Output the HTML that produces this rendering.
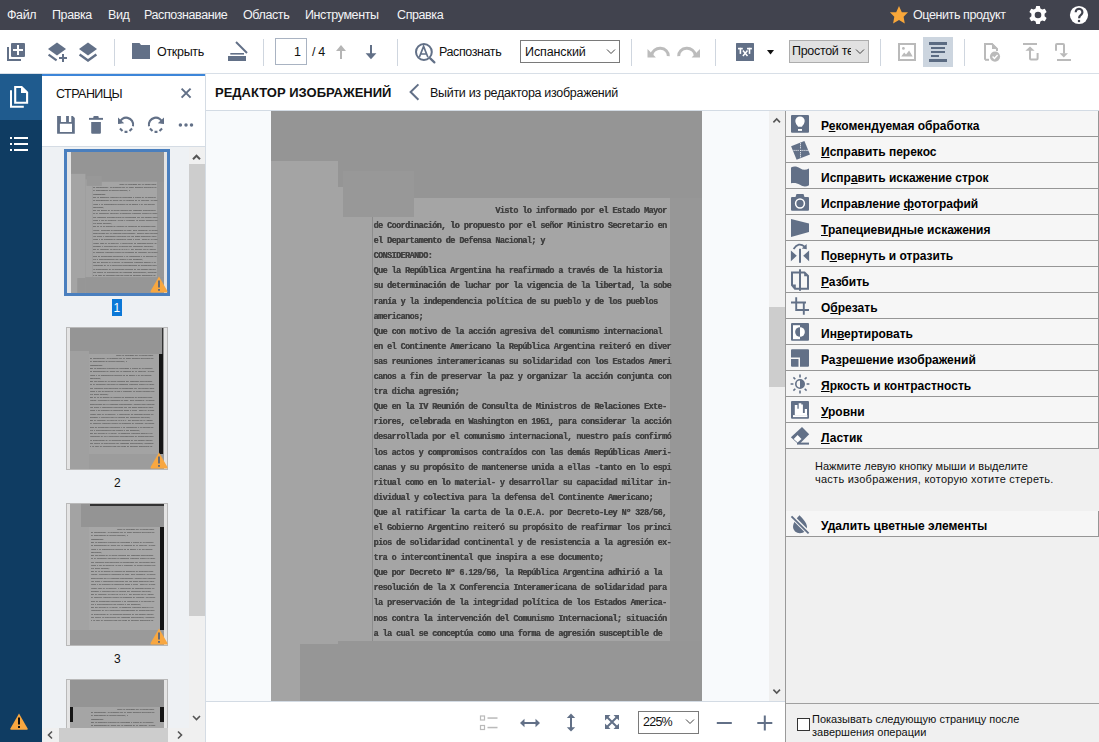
<!DOCTYPE html>
<html><head><meta charset="utf-8">
<style>
*{box-sizing:border-box;margin:0;padding:0}
html,body{width:1099px;height:742px;overflow:hidden;background:#fff;font-family:"Liberation Sans",sans-serif;color:#000}
.a{position:absolute}
.mi{position:absolute;top:8px;font-size:12.5px;color:#f4f4f6;letter-spacing:-0.4px;white-space:nowrap}
.tt{position:absolute;font-size:12.5px;color:#111;white-space:nowrap;letter-spacing:-0.3px}
.sep{position:absolute;top:39px;width:1px;height:27px;background:#cfd6df}
.it{position:absolute;left:786px;width:313px;height:26px;background:#f6f6f6;border-right:1px solid #969696;border-bottom:1px solid #969696}
.it span{position:absolute;left:35px;top:8px;font-size:12px;font-weight:700;white-space:nowrap;color:#000}
.it u{text-decoration:underline;text-decoration-thickness:1px;text-underline-offset:0.5px}
.dtx{position:absolute;left:102.5px;top:144px;font-family:"Liberation Mono",monospace;font-weight:700;font-size:8.5px;line-height:15.1px;letter-spacing:-0.594px;color:#424242;white-space:pre;filter:blur(0.3px);text-shadow:0.3px 0 0 #424242}
.th .dtx{opacity:0.6}
</style></head><body>

<!-- backgrounds -->
<div class="a" style="left:0;top:0;width:1099px;height:30px;background:#41434e"></div>
<div class="a" style="left:0;top:73px;width:1099px;height:1px;background:#d8dfe7"></div>
<div class="a" style="left:0;top:74px;width:42px;height:668px;background:#0f3c62"></div>
<div class="a" style="left:0;top:74px;width:42px;height:46px;background:#1f5b8e"></div>
<div class="a" style="left:42px;top:74px;width:163px;height:2px;background:#3d86d9"></div>
<div class="a" style="left:205px;top:74px;width:1px;height:668px;background:#d5dce4"></div>
<div class="a" style="left:42px;top:146px;width:163px;height:1px;background:#d5dce4"></div>
<div class="a" style="left:42px;top:147px;width:147px;height:581px;background:#eef1f4"></div>
<div class="a" style="left:189px;top:147px;width:16px;height:581px;background:#f0f0f0"></div>
<div class="a" style="left:189px;top:164px;width:16px;height:452px;background:#cdcdcd"></div>
<div class="a" style="left:42px;top:728px;width:163px;height:14px;background:#f0f0f0"></div>
<div class="a" style="left:59px;top:728px;width:109px;height:14px;background:#cdcdcd"></div>
<div class="a" style="left:206px;top:110px;width:579px;height:1px;background:#d3dbe4"></div>
<div class="a" style="left:206px;top:111px;width:563px;height:590px;background:#f8fafc"></div>
<div class="a" style="left:769px;top:111px;width:16px;height:590px;background:#f0f0f0"></div>
<div class="a" style="left:769px;top:307px;width:16px;height:80px;background:#cdcdcd"></div>
<div class="a" style="left:206px;top:701px;width:579px;height:1px;background:#d3dbe4"></div>
<div class="a" style="left:785px;top:110px;width:314px;height:632px;background:#f0f0f0"></div>
<div class="a" style="left:785px;top:110px;width:1px;height:632px;background:#9a9a9a"></div>
<div class="a" style="left:786px;top:703px;width:313px;height:1px;background:#a0a0a0"></div>

<!-- document image -->
<div class="a" style="left:271px;top:111px;width:431px;height:590px;overflow:hidden">
<div class="a" style="left:0;top:-51px;width:431px;height:653px"><div class="a" style="left:0;top:0;width:431px;height:653px;background:#959595">
<div class="a" style="left:0;top:101px;width:67px;height:552px;background:#a4a4a4"></div>
<div class="a" style="left:67px;top:127px;width:34px;height:454px;background:#a4a4a4"></div>
<div class="a" style="left:101px;top:138px;width:298px;height:443px;background:#a5a5a5;border-left:1px solid #8c8c8c"></div>
<div class="a" style="left:72px;top:111px;width:71px;height:46px;background:#989898"></div>
<div class="a" style="left:399px;top:138px;width:32px;height:443px;background:#979797"></div>
<div class="a" style="left:29px;top:584px;width:38px;height:69px;background:#969696"></div>
<div class="a" style="left:67px;top:581px;width:364px;height:72px;background:#969696"></div>
<pre class="dtx">                           Visto lo informado por el Estado Mayor
de Coordinación, lo propuesto por el señor Ministro Secretario en
el Departamento de Defensa Nacional; y
CONSIDERANDO:
Que la República Argentina ha reafirmado a través de la historia
su determinación de luchar por la vigencia de la libertad, la sobe
ranía y la independencia política de su pueblo y de los pueblos
americanos;
Que con motivo de la acción agresiva del comunismo internacional
en el Continente Americano la República Argentina reiteró en diver
sas reuniones interamericanas su solidaridad con los Estados Ameri
canos a fin de preservar la paz y organizar la acción conjunta con
tra dicha agresión;
Que en la IV Reunión de Consulta de Ministros de Relaciones Exte-
riores, celebrada en Washington en 1951, para considerar la acción
desarrollada por el comunismo internacional, nuestro país confirmó
los actos y compromisos contraídos con las demás Repúblicas Ameri-
canas y su propósito de mantenerse unida a ellas -tanto en lo espi
ritual como en lo material- y desarrollar su capacidad militar in-
dividual y colectiva para la defensa del Continente Americano;
Que al ratificar la carta de la O.E.A. por Decreto-Ley Nº 328/56,
el Gobierno Argentino reiteró su propósito de reafirmar los princi
pios de solidaridad continental y de resistencia a la agresión ex-
tra o intercontinental que inspira a ese documento;
Que por Decreto Nº 6.129/56, la República Argentina adhirió a la
resolución de la X Conferencia Interamericana de solidaridad para
la preservación de la integridad política de los Estados America-
nos contra la intervención del Comunismo Internacional; situación
a la cual se conceptúa como una forma de agresión susceptible de</pre>
</div></div>
</div>
<!-- thumbnails -->
<div class="a" style="left:64px;top:149px;width:106px;height:147px;border:3px solid #4a7fbe;background:#e4e4e4"></div>
<div class="a th" style="left:71px;top:152px;width:93px;height:141px;overflow:hidden"><div class="a" style="left:0;top:0;width:431px;height:653px;transform:scale(0.2158);transform-origin:0 0;filter:blur(1.2px)"><div class="a" style="left:0;top:0;width:431px;height:653px;background:#959595">
<div class="a" style="left:0;top:101px;width:67px;height:552px;background:#a4a4a4"></div>
<div class="a" style="left:67px;top:127px;width:34px;height:454px;background:#a4a4a4"></div>
<div class="a" style="left:101px;top:138px;width:298px;height:443px;background:#a5a5a5;border-left:1px solid #8c8c8c"></div>
<div class="a" style="left:72px;top:111px;width:71px;height:46px;background:#989898"></div>
<div class="a" style="left:399px;top:138px;width:32px;height:443px;background:#979797"></div>
<div class="a" style="left:29px;top:584px;width:38px;height:69px;background:#969696"></div>
<div class="a" style="left:67px;top:581px;width:364px;height:72px;background:#969696"></div>
<pre class="dtx">                           Visto lo informado por el Estado Mayor
de Coordinación, lo propuesto por el señor Ministro Secretario en
el Departamento de Defensa Nacional; y
CONSIDERANDO:
Que la República Argentina ha reafirmado a través de la historia
su determinación de luchar por la vigencia de la libertad, la sobe
ranía y la independencia política de su pueblo y de los pueblos
americanos;
Que con motivo de la acción agresiva del comunismo internacional
en el Continente Americano la República Argentina reiteró en diver
sas reuniones interamericanas su solidaridad con los Estados Ameri
canos a fin de preservar la paz y organizar la acción conjunta con
tra dicha agresión;
Que en la IV Reunión de Consulta de Ministros de Relaciones Exte-
riores, celebrada en Washington en 1951, para considerar la acción
desarrollada por el comunismo internacional, nuestro país confirmó
los actos y compromisos contraídos con las demás Repúblicas Ameri-
canas y su propósito de mantenerse unida a ellas -tanto en lo espi
ritual como en lo material- y desarrollar su capacidad militar in-
dividual y colectiva para la defensa del Continente Americano;
Que al ratificar la carta de la O.E.A. por Decreto-Ley Nº 328/56,
el Gobierno Argentino reiteró su propósito de reafirmar los princi
pios de solidaridad continental y de resistencia a la agresión ex-
tra o intercontinental que inspira a ese documento;
Que por Decreto Nº 6.129/56, la República Argentina adhirió a la
resolución de la X Conferencia Interamericana de solidaridad para
la preservación de la integridad política de los Estados America-
nos contra la intervención del Comunismo Internacional; situación
a la cual se conceptúa como una forma de agresión susceptible de</pre>
</div></div></div>
<div class="a" style="left:112px;top:299px;width:10px;height:17px;background:#0b78d7"></div>
<div class="a" style="left:113.5px;top:300.5px;font-size:12px;color:#fff">1</div>

<div class="a" style="left:66px;top:327px;width:102px;height:143px;border:1px solid #b9b9b9;background:#e4e4e4"></div>
<div class="a" style="left:70px;top:328px;width:94px;height:141px;background:#959595"></div>
<div class="a" style="left:70px;top:351px;width:19px;height:118px;background:#a0a0a0"></div>
<div class="a" style="left:89px;top:354px;width:70px;height:100px;background:#a3a3a3"></div>
<div class="a" style="left:89px;top:454px;width:75px;height:15px;background:#9c9c9c"></div>
<div class="a" style="left:90px;top:354px;width:68px;height:100px;overflow:hidden;opacity:0.6;filter:blur(0.3px)"><div class="a" style="left:0;top:0px;width:320px;height:500px;transform:scale(0.2158);transform-origin:0 0"><pre class="dtx" style="left:0;top:0">                           Visto lo informado por el Estado Mayor
de Coordinación, lo propuesto por el señor Ministro Secretario en
el Departamento de Defensa Nacional; y
CONSIDERANDO:
Que la República Argentina ha reafirmado a través de la historia
su determinación de luchar por la vigencia de la libertad, la sobe
ranía y la independencia política de su pueblo y de los pueblos
americanos;
Que con motivo de la acción agresiva del comunismo internacional
en el Continente Americano la República Argentina reiteró en diver
sas reuniones interamericanas su solidaridad con los Estados Ameri
canos a fin de preservar la paz y organizar la acción conjunta con
tra dicha agresión;
Que en la IV Reunión de Consulta de Ministros de Relaciones Exte-
riores, celebrada en Washington en 1951, para considerar la acción
desarrollada por el comunismo internacional, nuestro país confirmó
los actos y compromisos contraídos con las demás Repúblicas Ameri-
canas y su propósito de mantenerse unida a ellas -tanto en lo espi
ritual como en lo material- y desarrollar su capacidad militar in-
dividual y colectiva para la defensa del Continente Americano;
Que al ratificar la carta de la O.E.A. por Decreto-Ley Nº 328/56,
el Gobierno Argentino reiteró su propósito de reafirmar los princi
pios de solidaridad continental y de resistencia a la agresión ex-
tra o intercontinental que inspira a ese documento;
Que por Decreto Nº 6.129/56, la República Argentina adhirió a la
resolución de la X Conferencia Interamericana de solidaridad para
la preservación de la integridad política de los Estados America-
nos contra la intervención del Comunismo Internacional; situación
a la cual se conceptúa como una forma de agresión susceptible de</pre></div></div>
<div class="a" style="left:159px;top:354px;width:4px;height:100px;background:#151515"></div>
<div class="a" style="left:162px;top:328px;width:1px;height:26px;background:#333"></div>
<div class="a" style="left:114px;top:476px;font-size:12px;color:#111">2</div>

<div class="a" style="left:66px;top:503px;width:102px;height:143px;border:1px solid #b9b9b9;background:#e4e4e4"></div>
<div class="a" style="left:70px;top:504px;width:94px;height:141px;background:#a3a3a3"></div>
<div class="a" style="left:81px;top:504px;width:83px;height:23px;background:#949494"></div>
<div class="a" style="left:90px;top:504px;width:74px;height:1.5px;background:#333"></div>
<div class="a" style="left:89px;top:527px;width:71px;height:103px;background:#a7a7a7"></div>
<div class="a" style="left:70px;top:630px;width:94px;height:15px;background:#9a9a9a"></div>
<div class="a" style="left:91px;top:528px;width:67px;height:102px;overflow:hidden;opacity:0.6;filter:blur(0.3px)"><div class="a" style="left:0;top:0px;width:320px;height:500px;transform:scale(0.2158);transform-origin:0 0"><pre class="dtx" style="left:0;top:0">                           Visto lo informado por el Estado Mayor
de Coordinación, lo propuesto por el señor Ministro Secretario en
el Departamento de Defensa Nacional; y
CONSIDERANDO:
Que la República Argentina ha reafirmado a través de la historia
su determinación de luchar por la vigencia de la libertad, la sobe
ranía y la independencia política de su pueblo y de los pueblos
americanos;
Que con motivo de la acción agresiva del comunismo internacional
en el Continente Americano la República Argentina reiteró en diver
sas reuniones interamericanas su solidaridad con los Estados Ameri
canos a fin de preservar la paz y organizar la acción conjunta con
tra dicha agresión;
Que en la IV Reunión de Consulta de Ministros de Relaciones Exte-
riores, celebrada en Washington en 1951, para considerar la acción
desarrollada por el comunismo internacional, nuestro país confirmó
los actos y compromisos contraídos con las demás Repúblicas Ameri-
canas y su propósito de mantenerse unida a ellas -tanto en lo espi
ritual como en lo material- y desarrollar su capacidad militar in-
dividual y colectiva para la defensa del Continente Americano;
Que al ratificar la carta de la O.E.A. por Decreto-Ley Nº 328/56,
el Gobierno Argentino reiteró su propósito de reafirmar los princi
pios de solidaridad continental y de resistencia a la agresión ex-
tra o intercontinental que inspira a ese documento;
Que por Decreto Nº 6.129/56, la República Argentina adhirió a la
resolución de la X Conferencia Interamericana de solidaridad para
la preservación de la integridad política de los Estados America-
nos contra la intervención del Comunismo Internacional; situación
a la cual se conceptúa como una forma de agresión susceptible de</pre></div></div>
<div class="a" style="left:160px;top:527px;width:4px;height:103px;background:#151515"></div>
<div class="a" style="left:114px;top:652px;font-size:12px;color:#111">3</div>

<div class="a" style="left:66px;top:679px;width:102px;height:49px;border:1px solid #b9b9b9;border-bottom:none;background:#e4e4e4"></div>
<div class="a" style="left:70px;top:680px;width:94px;height:48px;background:#a5a5a5"></div>
<div class="a" style="left:70px;top:680px;width:94px;height:27px;background:#949494"></div>
<div class="a" style="left:91px;top:708px;width:67px;height:19px;overflow:hidden;opacity:0.6;filter:blur(0.3px)"><div class="a" style="left:0;top:0px;width:320px;height:500px;transform:scale(0.2158);transform-origin:0 0"><pre class="dtx" style="left:0;top:0">                           Visto lo informado por el Estado Mayor
de Coordinación, lo propuesto por el señor Ministro Secretario en
el Departamento de Defensa Nacional; y
CONSIDERANDO:
Que la República Argentina ha reafirmado a través de la historia
su determinación de luchar por la vigencia de la libertad, la sobe
ranía y la independencia política de su pueblo y de los pueblos
americanos;
Que con motivo de la acción agresiva del comunismo internacional
en el Continente Americano la República Argentina reiteró en diver
sas reuniones interamericanas su solidaridad con los Estados Ameri
canos a fin de preservar la paz y organizar la acción conjunta con
tra dicha agresión;
Que en la IV Reunión de Consulta de Ministros de Relaciones Exte-
riores, celebrada en Washington en 1951, para considerar la acción
desarrollada por el comunismo internacional, nuestro país confirmó
los actos y compromisos contraídos con las demás Repúblicas Ameri-
canas y su propósito de mantenerse unida a ellas -tanto en lo espi
ritual como en lo material- y desarrollar su capacidad militar in-
dividual y colectiva para la defensa del Continente Americano;
Que al ratificar la carta de la O.E.A. por Decreto-Ley Nº 328/56,
el Gobierno Argentino reiteró su propósito de reafirmar los princi
pios de solidaridad continental y de resistencia a la agresión ex-
tra o intercontinental que inspira a ese documento;
Que por Decreto Nº 6.129/56, la República Argentina adhirió a la
resolución de la X Conferencia Interamericana de solidaridad para
la preservación de la integridad política de los Estados America-
nos contra la intervención del Comunismo Internacional; situación
a la cual se conceptúa como una forma de agresión susceptible de</pre></div></div>
<div class="a" style="left:70px;top:707px;width:2.5px;height:15px;background:#151515"></div>
<div class="a" style="left:160px;top:707px;width:4px;height:15px;background:#151515"></div>
<!-- right panel items -->
<div class="it" style="top:110px;height:27px"><span style="top:9px">Р<u>е</u>комендуемая обработка</span></div>
<div class="it" style="top:137px;height:26px"><span><u>И</u>справить перекос</span></div>
<div class="it" style="top:163px;height:26px"><span>Испр<u>а</u>вить искажение строк</span></div>
<div class="it" style="top:189px;height:26px"><span>Исправление <u>ф</u>отографий</span></div>
<div class="it" style="top:215px;height:26px"><span><u>Т</u>рапециевидные искажения</span></div>
<div class="it" style="top:241px;height:26px"><span>П<u>о</u>вернуть и отразить</span></div>
<div class="it" style="top:267px;height:26px"><span><u>Р</u>азбить</span></div>
<div class="it" style="top:293px;height:26px"><span>О<u>б</u>резать</span></div>
<div class="it" style="top:319px;height:26px"><span>Ин<u>в</u>ертировать</span></div>
<div class="it" style="top:345px;height:26px"><span>Ра<u>з</u>решение изображений</span></div>
<div class="it" style="top:371px;height:26px"><span><u>Я</u>ркость и контрастность</span></div>
<div class="it" style="top:397px;height:26px"><span><u>У</u>ровни</span></div>
<div class="it" style="top:423px;height:26px"><span><u>Л</u>астик</span></div>
<div class="it" style="top:511px;height:26px"><span>У<u>д</u>алить цветные элементы</span></div>
<div class="a" style="left:786px;top:449px;width:312px;height:62px;background:#f0f0f0"></div>
<div class="a" style="left:785px;top:110px;width:314px;height:1px;background:#d3dbe4"></div>
<div class="a" style="left:815px;top:459.5px;font-size:11px;line-height:13.5px;color:#111;white-space:nowrap">Нажмите левую кнопку мыши и выделите<br><span style="letter-spacing:0.25px">часть изображения, которую хотите стереть.</span></div>

<!-- menu text -->
<div class="mi" style="left:7px">Файл</div>
<div class="mi" style="left:52px">Правка</div>
<div class="mi" style="left:108px">Вид</div>
<div class="mi" style="left:144px">Распознавание</div>
<div class="mi" style="left:243px">Область</div>
<div class="mi" style="left:305px">Инструменты</div>
<div class="mi" style="left:397px">Справка</div>
<div class="mi" style="left:913px">Оценить продукт</div>

<!-- toolbar -->
<div class="sep" style="left:114px"></div>
<div class="sep" style="left:263px"></div>
<div class="sep" style="left:397px"></div>
<div class="sep" style="left:631px"></div>
<div class="sep" style="left:715px"></div>
<div class="sep" style="left:880px"></div>
<div class="sep" style="left:964px"></div>
<div class="tt" style="left:157px;top:45px">Открыть</div>
<div class="a" style="left:275px;top:38px;width:32px;height:27px;border:1px solid #a9b3c2;background:#fff"></div>
<div class="tt" style="left:294px;top:45px">1</div>
<div class="tt" style="left:312px;top:45px">/ 4</div>
<div class="tt" style="left:439px;top:45px;letter-spacing:-0.4px">Распознать</div>
<div class="a" style="left:520px;top:40px;width:100px;height:23px;border:1px solid #7a7a7a;background:#fff"></div>
<div class="tt" style="left:525px;top:44.5px;letter-spacing:-0.1px">Испанский</div>
<div class="a" style="left:789px;top:40px;width:80px;height:23px;border:1px solid #adadad;background:#e1e1e1"></div>
<div class="a" style="left:792px;top:44px;width:59px;height:18px;overflow:hidden"><div class="tt" style="left:0;top:0">Простой текст</div></div>
<div class="a" style="left:923px;top:37px;width:30px;height:30px;background:#ccd5df"></div>

<!-- pages header -->
<div class="tt" style="left:56px;top:87px;letter-spacing:-0.55px">СТРАНИЦЫ</div>
<div class="a" style="left:215px;top:85px;font-size:13px;font-weight:700;color:#111;white-space:nowrap">РЕДАКТОР ИЗОБРАЖЕНИЙ</div>
<div class="tt" style="left:430px;top:86px">Выйти из редактора изображений</div>

<!-- bottom bar -->
<div class="a" style="left:638px;top:711px;width:61px;height:23px;border:1px solid #7a7a7a;background:#fff"></div>
<div class="tt" style="left:643px;top:715px;letter-spacing:-0.75px">225%</div>
<div class="a" style="left:797px;top:718px;width:13px;height:13px;border:1px solid #333;background:#fff"></div>
<div class="a" style="left:812px;top:712.5px;font-size:11px;line-height:13px;color:#111;white-space:nowrap">Показывать следующую страницу после<br>завершения операции</div>
<svg class="a" style="left:0;top:0" width="1099" height="742" viewBox="0 0 1099 742">
<!-- menubar: star, gear, help -->
<polygon fill="#f8a73a" points="899,5.9 901.8,12.3 908,12.3 903.6,16.7 904.8,23.4 899,20 893.1,23.4 894.3,16.7 889.9,12.3 896.2,12.3"/>
<g transform="translate(1038,15)">
<path fill="#fff" fill-rule="evenodd" d="M-1.8,-9 H1.8 L2.4,-6.4 L4.2,-5.4 L6.8,-6.2 L8.6,-3.1 L6.6,-1.2 V1.2 L8.6,3.1 L6.8,6.2 L4.2,5.4 L2.4,6.4 L1.8,9 H-1.8 L-2.4,6.4 L-4.2,5.4 L-6.8,6.2 L-8.6,3.1 L-6.6,1.2 V-1.2 L-8.6,-3.1 L-6.8,-6.2 L-4.2,-5.4 L-2.4,-6.4 Z M0,-3.3 A3.3,3.3 0 1,0 0,3.3 A3.3,3.3 0 1,0 0,-3.3 Z"/>
</g>
<circle cx="1079" cy="15" r="9.1" fill="#fff"/>
<path d="M1075.7,12.2 A3.35,3.35 0 1,1 1081.7,14.2 C1080.4,15.3 1079.1,16 1079.1,18.2" fill="none" stroke="#41434e" stroke-width="2.2"/>
<rect x="1077.9" y="19.9" width="2.2" height="2.2" fill="#41434e"/>

<!-- toolbar icons -->
<g fill="#627087">
<rect x="11" y="43" width="14" height="14" rx="1"/>
<path d="M7,47 h2 v12 h12 v2 h-14 z"/>
<polygon points="57,42.6 66,49 57,55.4 48,49"/>
<polygon points="88,42.6 97,49 88,55.4 79,49"/>
<path d="M132,43 h7.5 l1.5,2 h9 v14 h-18 z"/>
<rect x="228" y="56" width="18" height="5"/>
<rect x="230.3" y="53" width="13.7" height="1.6"/>
<rect x="736" y="43" width="18" height="18" rx="0.5"/>
</g>
<g stroke="#627087" fill="none">
<path d="M48.6,54.6 L56.6,60.4" stroke-width="2.2"/>
<path d="M79.6,54.6 L88,60.6 L96.4,54.6" stroke-width="2.4"/>
<path d="M236,42 L247,53" stroke-width="2"/>
</g>
<g fill="#fff">
<rect x="13" y="49" width="10" height="2"/>
<rect x="17" y="45" width="2" height="10"/>
</g>
<rect x="59" y="57" width="8" height="2" fill="#627087"/>
<rect x="62" y="54" width="2" height="8" fill="#627087"/>
<!-- page arrows -->
<path d="M341,45 L346,51 H342 V59 H340 V51 H336 Z" fill="#b5b5b5"/>
<path d="M371,59.3 L376.4,53.2 H372 V45 H370 V53.2 H365.6 Z" fill="#627087"/>
<!-- recognize -->
<circle cx="423.9" cy="52" r="7.9" stroke="#627087" stroke-width="2" fill="none"/>
<path d="M419.3,57.2 L423.6,46.4 L427.9,57.2 M420.6,54 H426.6" stroke="#627087" stroke-width="1.7" fill="none"/>
<path d="M430.2,58.4 L434.4,62.4" stroke="#627087" stroke-width="2.2" stroke-linecap="round"/>
<!-- dropdown chevrons -->
<path d="M607,49.5 L611,53.5 L615,49.5" stroke="#444" stroke-width="1" fill="none"/>
<path d="M856,49.5 L860,53.5 L864,49.5" stroke="#444" stroke-width="1" fill="none"/>
<!-- undo redo -->
<path d="M651.8,55.2 A8.2,7.4 0 0,1 668.3,56.2" stroke="#bcbcbc" stroke-width="3" fill="none"/>
<polygon points="647.5,49 647.5,57.4 655.9,57.4" fill="#bcbcbc"/>
<path d="M678.7,56.2 A8.2,7.4 0 0,1 695.2,55.2" stroke="#bcbcbc" stroke-width="3" fill="none"/>
<polygon points="700,49 700,57.4 691.6,57.4" fill="#bcbcbc"/>
<!-- TxT -->
<g fill="#fff"><rect x="738" y="47.8" width="4.8" height="1.6"/><rect x="739.6" y="47.8" width="1.6" height="6.1"/><rect x="747" y="47.8" width="4.9" height="1.6"/><rect x="748.7" y="47.8" width="1.6" height="6.1"/></g>
<path d="M742.9,50.4 L747.5,55.9 M747.5,50.4 L742.9,55.9" stroke="#fff" stroke-width="1.5"/>
<polygon points="767,50 774,50 770.5,54.4" fill="#111"/>
<!-- image icon disabled -->
<rect x="899" y="44" width="16" height="16" stroke="#bababa" stroke-width="2" fill="none"/>
<circle cx="903.4" cy="48.4" r="1.4" fill="#bababa"/>
<polygon points="901.2,56.6 904.2,52.4 906,54.6 909.1,50.4 912.7,56.6" fill="#bababa"/>
<!-- align icon -->
<g fill="#5b6b82">
<rect x="929" y="42" width="18" height="3"/>
<rect x="931" y="47" width="14" height="2"/>
<rect x="931" y="51" width="14" height="2"/>
<rect x="931" y="55" width="8" height="2"/>
<rect x="929" y="59" width="18" height="3"/>
</g>
<!-- doc check -->
<path d="M985,59.8 V44 H992 L997,49 V51" stroke="#bababa" stroke-width="2" fill="none"/>
<path d="M985,59.8 H989" stroke="#bababa" stroke-width="2"/>
<polygon points="992,43 998,49 992,49" fill="#bababa"/>
<circle cx="995" cy="56.6" r="5.1" fill="#bababa"/>
<path d="M992.6,56.6 L994.4,58.4 L997.6,55" stroke="#fff" stroke-width="1.4" fill="none"/>
<!-- upload -->
<rect x="1023" y="43" width="14" height="2" fill="#bababa"/>
<polygon points="1030,46.6 1034.6,50.8 1025.4,50.8" fill="#bababa"/>
<path d="M1030,50 V58.6 Q1030,59.6 1031,59.6 H1036.6 Q1037.6,59.6 1037.6,58.6 V53" stroke="#bababa" stroke-width="2" fill="none"/>
<!-- download -->
<path d="M1056,50.8 V45 Q1056,44 1057,44 H1063 Q1064,44 1064,45 V53.5" stroke="#bababa" stroke-width="2" fill="none"/>
<polygon points="1059.6,53.3 1068,53.3 1063.8,57.5" fill="#bababa"/>
<rect x="1057" y="59" width="14" height="2" fill="#bababa"/>

<!-- sidebar icons -->
<path d="M15.2,102.7 V87 H21.6 L27.1,92.5 V102.7 Z" stroke="#fff" stroke-width="2.1" fill="none"/>
<polygon points="21,86 28.1,93.1 21,93.1" fill="#fff"/>
<path d="M11,90.2 V106.7 H23.8" stroke="#fff" stroke-width="2" fill="none"/>
<g fill="#fff">
<rect x="10" y="137" width="2" height="2"/><rect x="14" y="137" width="14" height="2"/>
<rect x="10" y="143" width="2" height="2"/><rect x="14" y="143" width="14" height="2"/>
<rect x="10" y="149" width="2" height="2"/><rect x="14" y="149" width="14" height="2"/>
</g>
<!-- bottom warning -->
<path d="M19,713.6 L27.6,728.4 Q28.2,729.8 26.8,729.8 H11.2 Q9.8,729.8 10.4,728.4 Z" fill="#f8a740"/>
<rect x="18" y="717.5" width="2" height="7" fill="#111"/>
<rect x="18" y="726" width="2" height="2" fill="#111"/>

<!-- pages panel icons -->
<path d="M181.6,88.6 L190.6,97.6 M190.6,88.6 L181.6,97.6" stroke="#627087" stroke-width="2"/>
<path fill="#627087" fill-rule="evenodd" d="M57.1,116 H72.8 L74.8,118 V133.8 H57.1 Z M60.9,116 V121.9 H66.1 V116 Z M68.9,116 V121.9 H71.3 V116 Z M59.9,123.8 V132.1 H72 V123.8 Z"/>
<g fill="#627087">
<rect x="93.3" y="116" width="5.4" height="3" rx="1"/>
<rect x="89" y="117.9" width="14" height="1.9"/>
<path d="M91.2,121.9 H100.9 V132.8 Q100.9,133.8 99.9,133.8 H92.2 Q91.2,133.8 91.2,132.8 Z"/>
<circle cx="180.4" cy="125" r="1.75"/><circle cx="186" cy="125" r="1.75"/><circle cx="191.5" cy="125" r="1.75"/>
</g>
<g id="rotl">
<path d="M119.3,123.2 A7,7 0 0,1 133,126.2" stroke="#627087" stroke-width="2.1" fill="none"/>
<path d="M132.06,128.5 L129.5,131.06 M127.46,131.85 L124.54,131.85 M122.5,131.06 L119.94,128.5" stroke="#627087" stroke-width="2.1" fill="none"/>
<polygon points="118,117.5 118,124 124.2,123.2" fill="#627087"/>
</g>
<use href="#rotl" transform="translate(282,0) scale(-1,1)"/>
<!-- thumbnail warnings -->
<g id="warn">
<path d="M159,276.4 L167.4,291 Q168,292.6 166.4,292.6 H151.6 Q150,292.6 150.6,291 Z" fill="#f8a740"/>
<rect x="158.1" y="280.5" width="1.8" height="7" fill="#56647a"/>
<rect x="158.1" y="289" width="1.8" height="1.8" fill="#56647a"/>
</g>
<use href="#warn" transform="translate(0,176)"/>
<use href="#warn" transform="translate(0,352)"/>
<!-- scrollbar arrows pages -->
<path d="M193,159.2 L196.5,155.7 L200,159.2" stroke="#555" stroke-width="2" fill="none"/>
<path d="M193,716 L196.5,719.5 L200,716" stroke="#555" stroke-width="1.6" fill="none"/>
<path d="M52,731.5 L48.5,735 L52,738.5" stroke="#555" stroke-width="1.6" fill="none"/>
<path d="M178,731.5 L181.5,735 L178,738.5" stroke="#555" stroke-width="1.6" fill="none"/>
<!-- editor header chevron -->
<path d="M418.4,84.4 L410.6,92 L418.4,99.8" stroke="#627087" stroke-width="2" fill="none"/>
<!-- editor scrollbar arrows -->
<path d="M773.4,122.4 L776.7,119 L780,122.4" stroke="#555" stroke-width="1.6" fill="none"/>
<path d="M773.4,689.6 L776.7,693 L780,689.6" stroke="#555" stroke-width="1.6" fill="none"/>
<!-- bottom bar icons -->
<g fill="#bababa">
<rect x="480.5" y="716" width="4" height="4" stroke="#bababa" stroke-width="1.2" fill="none"/>
<rect x="480.5" y="725.5" width="4" height="4" stroke="#bababa" stroke-width="1.2" fill="none"/>
<rect x="487.5" y="717.3" width="10" height="1.5"/>
<rect x="487.5" y="726.8" width="10" height="1.5"/>
</g>
<g fill="#627087">
<rect x="523" y="722" width="14" height="2"/>
<polygon points="520,723 524.5,718.8 524.5,727.2"/>
<polygon points="540,723 535.5,718.8 535.5,727.2"/>
<rect x="570" y="717" width="2" height="12"/>
<polygon points="571,713.6 566.8,718 575.2,718"/>
<polygon points="571,731.6 566.8,727.2 575.2,727.2"/>
<rect x="716.8" y="722" width="15" height="2"/>
<rect x="757.3" y="722" width="15" height="2"/>
<rect x="763.8" y="715.5" width="2" height="15"/>
</g>
<g stroke="#627087" stroke-width="2" fill="none">
<path d="M607,717 L617,727 M617,717 L607,727"/>
</g>
<g fill="#627087">
<polygon points="605,715 610.5,715 605,720.5"/>
<polygon points="619,715 613.5,715 619,720.5"/>
<polygon points="605,729 610.5,729 605,723.5"/>
<polygon points="619,729 613.5,729 619,723.5"/>
</g>
<path d="M686,719.5 L690,723.5 L694,719.5" stroke="#444" stroke-width="1" fill="none"/>
<!-- right panel icons -->
<g fill="#627087">
<rect x="791" y="115" width="18" height="17.7" rx="1"/>
<polygon points="791.1,146.3 804.4,140.9 810,154.5 796.6,159.8"/>
<path d="M791,167.5 C794,165.8 797,166.3 800,168.3 C803,170.3 806,170.4 809,168.4 V185.2 C806,187 803,186.8 800,184.8 C797,182.8 794,182.6 791,183.2 Z"/>
<path d="M791,198 Q791,197 792,197 H795.5 L796.5,194 H803.5 L804.5,197 H808 Q809,197 809,198 V209.7 Q809,210.7 808,210.7 H792 Q791,210.7 791,209.7 Z"/>
<polygon points="791,219.1 809,223.5 809,232 791,236.9"/>
<rect x="799" y="248.8" width="2" height="14"/>
<polygon points="790.9,250.4 796.8,255.8 790.9,261.2"/>
<polygon points="809.1,250.4 803.2,255.8 809.1,261.2"/>
<rect x="799" y="269.3" width="2" height="21.5"/>
<rect x="791" y="323" width="18" height="17.8" rx="1"/>
<path fill-rule="evenodd" d="M792,349.2 H808 Q809,349.2 809,350.2 V365.7 Q809,366.7 808,366.7 H792 Q791,366.7 791,365.7 V350.2 Q791,349.2 792,349.2 Z M791,357.5 V359 H798.5 V366.7 H800 V357.5 Z"/>
<rect x="791" y="400.9" width="18" height="17.9" rx="1"/>
<polygon points="802,427 809.2,434.2 800.2,443.2 797.4,443.2 790.9,437.3"/>
<rect x="797" y="442.6" width="12" height="2"/>
</g>
<circle cx="800" cy="150.35" r="0" fill="#fff"/>
<g fill="#fff">
<rect x="793.6" y="149.9" width="1" height="1"/><rect x="795.6" y="149.9" width="1" height="1"/><rect x="797.6" y="149.9" width="1" height="1"/><rect x="801.6" y="149.9" width="1" height="1"/><rect x="803.6" y="149.9" width="1" height="1"/><rect x="805.6" y="149.9" width="1" height="1"/><rect x="807.4" y="149.9" width="1" height="1"/>
<rect x="800" y="143.3" width="1" height="1"/><rect x="800" y="145.3" width="1" height="1"/><rect x="800" y="147.3" width="1" height="1"/><rect x="800" y="149.9" width="1" height="1"/><rect x="800" y="152.3" width="1" height="1"/><rect x="800" y="154.3" width="1" height="1"/><rect x="800" y="156.3" width="1" height="1"/>
</g>
<circle cx="800" cy="203.5" r="4.4" fill="none" stroke="#fff" stroke-width="1.5"/>
<!-- lightbulb -->
<circle cx="800" cy="121.1" r="4.7" fill="#fff"/>
<polygon points="795.8,123 804.2,123 801.9,126.7 798.1,126.7" fill="#fff"/>
<rect x="798" y="129" width="4" height="1.9" fill="#fff"/>
<!-- rotate flip arc -->
<path d="M793.6,249 Q798.5,241.5 804.6,246.6" fill="none" stroke="#627087" stroke-width="1.8"/>
<polygon points="806.6,244 806.8,249.2 801.8,248.4" fill="#627087"/>
<!-- split -->
<path d="M799,272.4 H792 V285.2 L795,288.7 H799" fill="none" stroke="#627087" stroke-width="2"/>
<path d="M801,272.4 H804.5 L808,276 V288.7 H801" fill="none" stroke="#627087" stroke-width="2"/>
<polygon points="792,284.5 795.8,284.5 795.8,288.7" fill="#627087"/>
<polygon points="804.2,272.4 804.2,276.3 808,276.3" fill="#627087"/>
<!-- crop -->
<path d="M791,302.5 H806 M796.2,297.3 V310 H809 M803.8,302.5 V314.8" fill="none" stroke="#627087" stroke-width="1.9"/>
<!-- invert -->
<rect x="793" y="325.2" width="7" height="14" fill="#fff"/>
<path d="M800,327.15 A4.85,4.85 0 0,0 800,336.85 Z" fill="#627087"/>
<path d="M800,327.15 A4.85,4.85 0 0,1 800,336.85 Z" fill="#fff"/>
<!-- brightness -->
<circle cx="800" cy="384" r="4.2" fill="none" stroke="#627087" stroke-width="1.6"/>
<path d="M800,379.8 A4.2,4.2 0 0,1 800,388.2 Z" fill="#627087"/>
<path d="M800,374.6 V377.4 M800,390.6 V393.4 M790.6,384 H793.4 M806.6,384 H809.4 M793.4,377.4 L795.3,379.3 M804.7,388.7 L806.6,390.6 M806.6,377.4 L804.7,379.3 M795.3,388.7 L793.4,390.6" stroke="#627087" stroke-width="1.6"/>
<!-- levels -->
<path d="M794.8,415.1 V405.1 H797.4 V408.7 H798.7 V403.2 H801.3 V404.5 H802.9 V412.9 H804.8 V409 H807 V415.1 Z" fill="#fff"/>
<rect x="793" y="415.1" width="14.3" height="2" fill="#fff"/>
<!-- eraser white -->
<polygon points="797.6,435 801.5,438.9 797.6,442.6 793.7,438.9" fill="#fff"/>
<!-- drop strike -->
<path d="M799.5,515.2 C802.5,518.5 807,522.5 807,527 A7,6.2 0 0,1 793,527 C793,522.5 796.5,518.5 799.5,515.2 Z" fill="#627087"/>
<path d="M790,514.6 L810,534.6" stroke="#f6f6f6" stroke-width="4.2"/>
<path d="M791.5,516.3 L808.6,533.4" stroke="#627087" stroke-width="1.9"/>

</svg>

</body></html>
